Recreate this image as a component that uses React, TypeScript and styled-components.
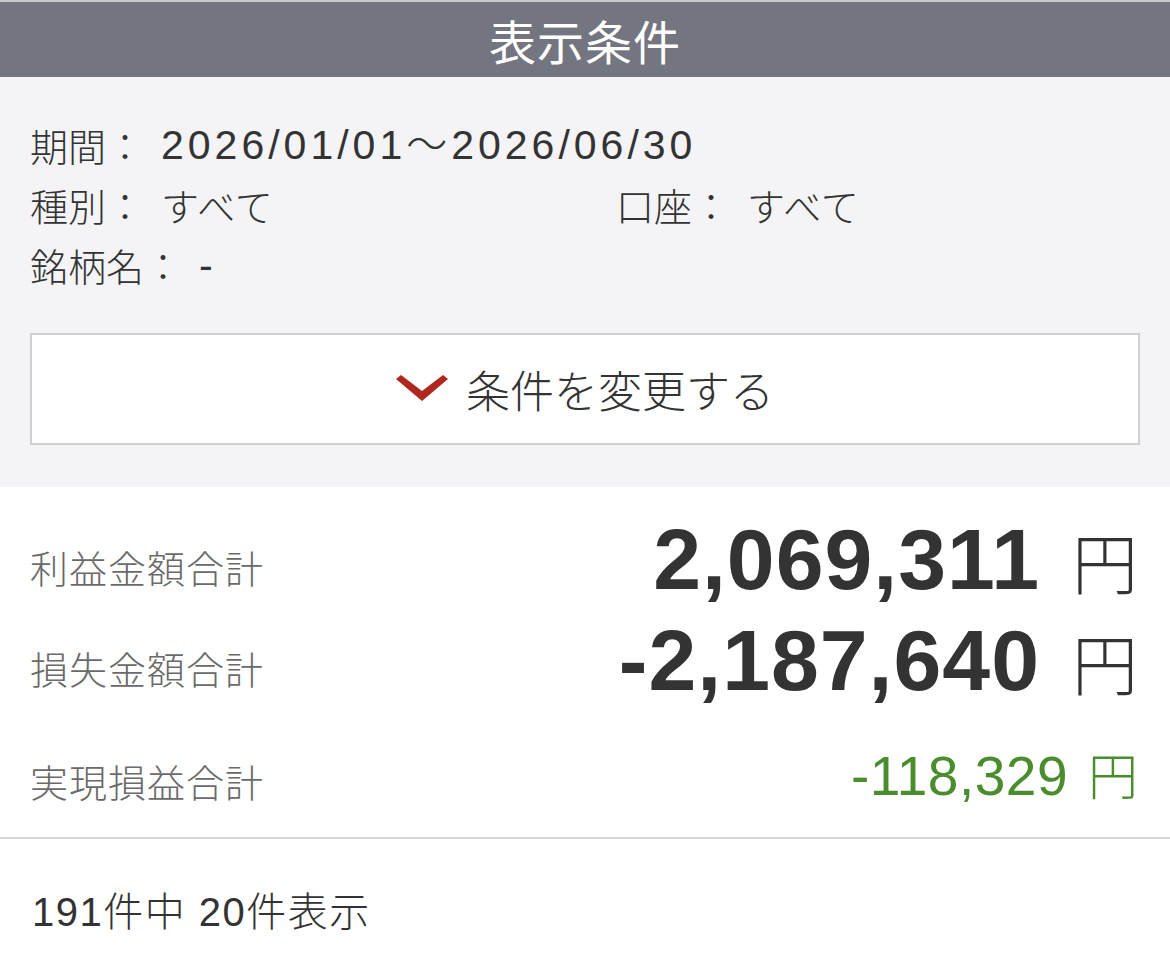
import React from "react";
import styled, { createGlobalStyle } from "styled-components";

const GlobalStyle = createGlobalStyle`
  html, body {
    margin: 0;
    padding: 0;
    background: #ffffff;
  }
  body {
    font-family: "Liberation Sans", "Noto Sans CJK JP", sans-serif;
    color: #333333;
  }
`;

const Page = styled.div`
  width: 1170px;
  min-height: 973px;
  background: #ffffff;
  border-top: 2px solid #c9c9cc;
`;

const TitleBar = styled.div`
  height: 75px;
  background: #737580;
  display: flex;
  align-items: center;
  justify-content: center;
  color: #ffffff;
  font-family: "Noto Sans CJK JP", sans-serif;
  font-size: 47px;
  letter-spacing: 1px;
`;

const ConditionPanel = styled.section`
  background: #f4f4f6;
  padding: 38px 30px 42px;
`;

const InfoGrid = styled.div`
  display: grid;
  grid-template-columns: 586px 1fr;
  grid-auto-rows: 60px;
  font-size: 38px;
  line-height: 60px;
  color: #333333;
`;

const InfoItem = styled.div<{ $span?: boolean }>`
  display: flex;
  align-items: center;
  height: 60px;
  white-space: nowrap;
  grid-column: ${(p) => (p.$span ? "1 / -1" : "auto")};
`;

const InfoLabel = styled.span`
  font-family: "Noto Sans CJK JP", sans-serif;
  font-weight: 300;
  margin-right: 17px;
`;

const InfoValue = styled.span`
  font-family: "Liberation Sans", "Noto Sans CJK JP", sans-serif;
  font-weight: 300;
  font-size: 41px;
  line-height: 60px;
  letter-spacing: 4px;
`;

const KanaValue = styled.span`
  font-family: "Noto Sans CJK JP", sans-serif;
  font-weight: 300;
  letter-spacing: 1px;
`;

const ChangeButton = styled.button`
  margin-top: 38px;
  width: 100%;
  height: 112px;
  background: #ffffff;
  border: 2px solid #d0d0d2;
  display: flex;
  align-items: center;
  justify-content: center;
  gap: 18px;
  padding: 0;
  cursor: pointer;
  font-family: "Noto Sans CJK JP", sans-serif;
  font-weight: 300;
  font-size: 44px;
  color: #333333;
`;

const Chevron = styled.svg`
  width: 52px;
  height: 28px;
  flex: none;
`;

const Summary = styled.section`
  padding: 22px 32px 2px 30px;
  border-bottom: 2px solid #d8d8da;
`;

const SummaryRow = styled.div<{ $height: number }>`
  height: ${(p) => p.$height}px;
  display: flex;
  align-items: center;
  justify-content: space-between;
`;

const SummaryLabel = styled.span`
  font-family: "Noto Sans CJK JP", sans-serif;
  font-weight: 300;
  font-size: 38px;
  letter-spacing: 1px;
  color: #6a6a6a;
  margin-top: 14px;
`;

const Amount = styled.span<{ $tone: "dark" | "green"; $size: number; $bold?: boolean }>`
  display: flex;
  align-items: baseline;
  white-space: nowrap;
  color: ${(p) => (p.$tone === "green" ? "#4a8d2c" : "#333333")};
  font-family: "Liberation Sans", sans-serif;
  font-size: ${(p) => p.$size}px;
  font-weight: ${(p) => (p.$bold ? 700 : 400)};
  letter-spacing: ${(p) => (p.$bold ? "1px" : "0.5px")};
`;

const Yen = styled.span<{ $size: number; $gap: number }>`
  font-family: "Noto Sans CJK JP", sans-serif;
  font-weight: 300;
  font-size: ${(p) => p.$size}px;
  margin-left: ${(p) => p.$gap}px;
  letter-spacing: 0;
`;

const CountLine = styled.div`
  padding: 0 32px;
  height: 140px;
  display: flex;
  align-items: center;
  font-family: "Liberation Sans", "Noto Sans CJK JP", sans-serif;
  font-weight: 300;
  font-size: 40px;
  letter-spacing: 1.5px;
  color: #333333;
`;

type Row = {
  label: string;
  value: string;
  tone: "dark" | "green";
  size: number;
  bold: boolean;
  yenSize: number;
  yenGap: number;
  height: number;
};

const rows: Row[] = [
  { label: "利益金額合計", value: "2,069,311", tone: "dark", size: 86, bold: true, yenSize: 66, yenGap: 32, height: 100 },
  { label: "損失金額合計", value: "-2,187,640", tone: "dark", size: 86, bold: true, yenSize: 66, yenGap: 32, height: 102 },
  { label: "実現損益合計", value: "-118,329", tone: "green", size: 55, bold: false, yenSize: 50, yenGap: 20, height: 124 },
];

export default function App() {
  return (
    <>
      <GlobalStyle />
      <Page>
        <TitleBar>表示条件</TitleBar>
        <ConditionPanel>
          <InfoGrid>
            <InfoItem $span>
              <InfoLabel>期間：</InfoLabel>
              <InfoValue>2026/01/01〜2026/06/30</InfoValue>
            </InfoItem>
            <InfoItem>
              <InfoLabel>種別：</InfoLabel>
              <KanaValue>すべて</KanaValue>
            </InfoItem>
            <InfoItem>
              <InfoLabel>口座：</InfoLabel>
              <KanaValue>すべて</KanaValue>
            </InfoItem>
            <InfoItem $span>
              <InfoLabel>銘柄名：</InfoLabel>
              <InfoValue>-</InfoValue>
            </InfoItem>
          </InfoGrid>
          <ChangeButton type="button">
            <Chevron viewBox="0 0 52 28" aria-hidden="true">
              <path d="M0 4 L5 0 L26 16 L47 0 L52 4 L26 26 Z" fill="#b0271f" />
            </Chevron>
            条件を変更する
          </ChangeButton>
        </ConditionPanel>
        <Summary>
          {rows.map((r) => (
            <SummaryRow key={r.label} $height={r.height}>
              <SummaryLabel>{r.label}</SummaryLabel>
              <Amount $tone={r.tone} $size={r.size} $bold={r.bold}>
                {r.value}
                <Yen $size={r.yenSize} $gap={r.yenGap}>円</Yen>
              </Amount>
            </SummaryRow>
          ))}
        </Summary>
        <CountLine>191件中 20件表示</CountLine>
      </Page>
    </>
  );
}
